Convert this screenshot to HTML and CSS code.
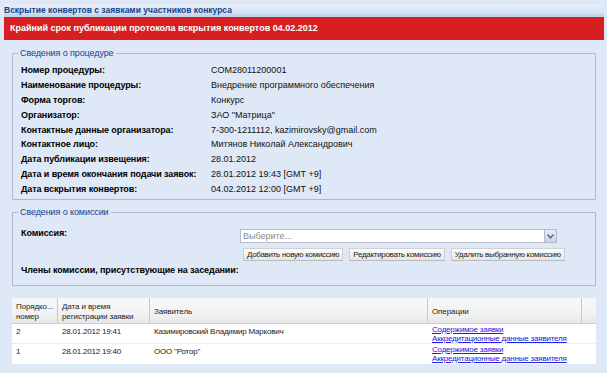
FILE: index.html
```html
<!DOCTYPE html>
<html lang="ru">
  <head>
    <meta charset="UTF-8" />
    <title>Вскрытие конвертов</title>
    <link rel="stylesheet" href="styles.css">
  </head>
  <body>
    <div class="panel">
      <div class="panel-title">Вскрытие конвертов с заявками участников конкурса</div>
      <div class="deadline">Крайний срок публикации протокола вскрытия конвертов 04.02.2012</div>

      <fieldset class="box proc-box">
        <legend>Сведения о процедуре</legend>
        <div class="info">
          <div class="info-row"><span class="info-label">Номер процедуры:</span><span>COM28011200001</span></div>
          <div class="info-row"><span class="info-label">Наименование процедуры:</span><span>Внедрение программного обеспечения</span></div>
          <div class="info-row"><span class="info-label">Форма торгов:</span><span>Конкурс</span></div>
          <div class="info-row"><span class="info-label">Организатор:</span><span>ЗАО "Матрица"</span></div>
          <div class="info-row"><span class="info-label">Контактные данные организатора:</span><span>7-300-1211112, kazimirovsky@gmail.com</span></div>
          <div class="info-row"><span class="info-label">Контактное лицо:</span><span>Митянов Николай Александрович</span></div>
          <div class="info-row"><span class="info-label">Дата публикации извещения:</span><span>28.01.2012</span></div>
          <div class="info-row"><span class="info-label">Дата и время окончания подачи заявок:</span><span>28.01.2012 19:43 [GMT +9]</span></div>
          <div class="info-row"><span class="info-label">Дата вскрытия конвертов:</span><span>04.02.2012 12:00 [GMT +9]</span></div>
        </div>
      </fieldset>

      <fieldset class="box comm-box">
        <legend>Сведения о комиссии</legend>
        <div class="comm-row">
          <span class="info-label">Комиссия:</span>
          <div class="comm-controls">
            <div class="combo">
              <span class="combo-text">Выберите...</span>
              <span class="combo-btn">
                <svg width="7" height="5" viewBox="0 0 7 5"><path d="M0.5 0.5 L3.5 4 L6.5 0.5" fill="none" stroke="#4d6a8f" stroke-width="1.4"/></svg>
              </span>
            </div>
            <div class="btn-row">
              <button class="btn">Добавить новую комиссию</button>
              <button class="btn">Редактировать комиссию</button>
              <button class="btn">Удалить выбранную комиссию</button>
            </div>
          </div>
        </div>
        <div class="info-label members">Члены комиссии, присутствующие на заседании:</div>
      </fieldset>

      <div class="grid">
        <div class="grid-head">
          <div class="cell c-num">Порядко...<br>номер</div>
          <div class="cell c-date">Дата и время<br>регистрации заявки</div>
          <div class="cell c-name">Заявитель</div>
          <div class="cell c-ops">Операции</div>
          <div class="cell c-rest"></div>
        </div>
        <div class="grid-row">
          <div class="cell c-num">2</div>
          <div class="cell c-date">28.01.2012 19:41</div>
          <div class="cell c-name">Казимировский Владимир Маркович</div>
          <div class="cell c-ops"><a href="#">Содержимое заявки</a><a href="#">Аккредитационные данные заявителя</a></div>
        </div>
        <div class="grid-row">
          <div class="cell c-num">1</div>
          <div class="cell c-date">28.01.2012 19:40</div>
          <div class="cell c-name">ООО "Ротор"</div>
          <div class="cell c-ops"><a href="#">Содержимое заявки</a><a href="#">Аккредитационные данные заявителя</a></div>
        </div>
      </div>
    </div>
  </body>
</html>
```

FILE: styles.css
```css
* {
  margin: 0;
  padding: 0;
  box-sizing: border-box;
}
body {
  background: #dfe8f6;
  font-family: "Liberation Sans", Arial, sans-serif;
  font-size: 9px;
  color: #000;
}
.panel {
  padding: 4px 3px 0 4px;
}
.panel-title {
  height: 13px;
  padding: 2px 0 0 0;
  font-size: 8.5px;
  font-weight: bold;
  color: #15428b;
  background: linear-gradient(#e6eef8, #d3e0f2);
  border-bottom: 3px solid #c3d6ee;
  line-height: 9px;
  white-space: nowrap;
}
.deadline {
  height: 23px;
  background: #d71f1f;
  color: #fff;
  font-weight: bold;
  font-size: 9px;
  padding: 6px 0 0 6px;
  white-space: nowrap;
}
.box {
  margin: 8px 8px 0 8px;
  border: 1px solid #b5b8c8;
  padding: 0 8px;
}
.box legend {
  color: #15428b;
  font-size: 9px;
  letter-spacing: -0.1px;
  padding: 0 2px;
  margin-left: -3px;
}
.proc-box {
  height: 152px;
}
.info {
  padding-top: 5px;
}
.info-row {
  display: flex;
  height: 14.8px;
  align-items: center;
  white-space: nowrap;
}
.info-row span:last-child {
  color: #111;
}
.info-label {
  font-weight: bold;
  font-size: 9px;
  letter-spacing: -0.1px;
  width: 190px;
  flex-shrink: 0;
  white-space: nowrap;
}
.comm-box {
  margin-top: 7px;
  height: 79px;
}
.comm-row {
  display: flex;
  padding-top: 10px;
}
.comm-row .info-label {
  width: 219px;
  padding-top: 1px;
}
.comm-controls {
  display: flex;
  flex-direction: column;
  padding-top: 2px;
}
.combo {
  width: 317px;
  height: 14px;
  display: flex;
  background: #fff;
  border: 1px solid #b5b8c8;
}
.combo-text {
  flex: 1;
  color: #8a8a8a;
  padding: 0 0 0 2px;
  line-height: 12px;
}
.combo-btn {
  width: 12px;
  background: linear-gradient(#e6edf7, #c4d3e8);
  border-left: 1px solid #b5b8c8;
  display: flex;
  align-items: center;
  justify-content: center;
}
.btn-row {
  display: flex;
  gap: 6px;
  margin-top: 5px;
  margin-left: 3px;
}
.btn {
  font-family: "Liberation Sans", Arial, sans-serif;
  font-size: 8px;
  letter-spacing: -0.3px;
  height: 13px;
  padding: 0 3px;
  color: #222;
  background: linear-gradient(#fdfdfd, #e6e6e6);
  border: 1px solid #d0d0d0;
  border-bottom-color: #b9b9b9;
  line-height: 11px;
  white-space: nowrap;
}
.members {
  width: auto;
  margin-top: 4px;
}
.grid {
  margin: 12px 8px 0 8px;
  background: #fff;
  width: 584px;
}
.grid-head {
  display: flex;
  height: 26px;
  background: linear-gradient(#f8f8f8 0%, #f1f1f1 70%, #e6e6e6 100%);
  border-bottom: 1px solid #d0d0d0;
  color: #222;
  font-size: 8px;
  letter-spacing: -0.1px;
}
.grid-head .cell {
  border-right: 1px solid #c8c8c8;
  padding: 4px 4px 0 4px;
  line-height: 10px;
}
.grid-head .c-name,
.grid-head .c-ops {
  padding-top: 9px;
}
.grid-head .c-rest {
  border-right: none;
  flex: 1;
}
.c-num {
  width: 46px;
}
.c-date {
  width: 92px;
}
.c-name {
  width: 278px;
}
.c-ops {
  width: 154px;
}
.grid-row {
  display: flex;
  height: 20px;
  font-size: 8px;
  letter-spacing: -0.2px;
  color: #222;
  border-bottom: 1px dotted #e0e0e0;
  white-space: nowrap;
}
.grid-row:last-child {
  border-bottom: none;
}
.grid-row .cell {
  padding: 3px 4px 0 4px;
  line-height: 9px;
}
.grid-row .c-ops {
  padding-top: 1px;
}
.c-ops a {
  display: block;
  color: #2020e0;
  line-height: 9px;
}
```
